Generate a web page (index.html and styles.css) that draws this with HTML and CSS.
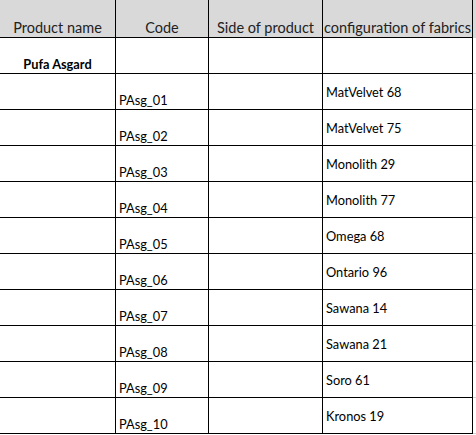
FILE: index.html
```html
<!DOCTYPE html>
<html>
<head>
<meta charset="utf-8">
<link rel="stylesheet" href="styles.css">
</head>
<body>
<table class="sheet">
  <colgroup>
    <col class="c-name"><col class="c-code"><col class="c-side"><col class="c-fab"><col class="c-gut">
  </colgroup>
  <thead>
    <tr class="head">
      <th>Product name</th><th>Code</th><th>Side of product</th><th>configuration of fabrics</th><th class="gut"></th>
    </tr>
  </thead>
  <tbody>
    <tr><td class="title">Pufa Asgard</td><td></td><td></td><td></td><td class="gut"></td></tr>
    <tr><td></td><td class="code">PAsg_01</td><td></td><td class="fab">MatVelvet 68</td><td class="gut"></td></tr>
    <tr><td></td><td class="code">PAsg_02</td><td></td><td class="fab">MatVelvet 75</td><td class="gut"></td></tr>
    <tr><td></td><td class="code">PAsg_03</td><td></td><td class="fab">Monolith 29</td><td class="gut"></td></tr>
    <tr><td></td><td class="code">PAsg_04</td><td></td><td class="fab">Monolith 77</td><td class="gut"></td></tr>
    <tr><td></td><td class="code">PAsg_05</td><td></td><td class="fab">Omega 68</td><td class="gut"></td></tr>
    <tr><td></td><td class="code">PAsg_06</td><td></td><td class="fab">Ontario 96</td><td class="gut"></td></tr>
    <tr><td></td><td class="code">PAsg_07</td><td></td><td class="fab">Sawana 14</td><td class="gut"></td></tr>
    <tr><td></td><td class="code">PAsg_08</td><td></td><td class="fab">Sawana 21</td><td class="gut"></td></tr>
    <tr><td></td><td class="code">PAsg_09</td><td></td><td class="fab">Soro 61</td><td class="gut"></td></tr>
    <tr><td></td><td class="code">PAsg_10</td><td></td><td class="fab">Kronos 19</td><td class="gut"></td></tr>
  </tbody>
</table>
</body>
</html>
```
FILE: styles.css
```css
html, body {
  margin: 0;
  padding: 0;
  background: #ffffff;
  overflow: hidden;
}
.sheet {
  border-collapse: separate;
  border-spacing: 0;
  table-layout: fixed;
  width: 477px;
  font-family: Lato, "Open Sans", sans-serif;
  color: #000;
}
.c-name { width: 116px; }
.c-code { width: 93px; }
.c-side { width: 114px; }
.c-fab { width: 150px; }
.c-gut { width: 4px; }
.sheet th,
.sheet td {
  box-sizing: border-box;
  padding: 0;
  border-right: 1px solid #000;
  border-bottom: 1px solid #000;
  white-space: nowrap;
  overflow: hidden;
}
.head th {
  height: 38px;
  background: #d9d9d9;
  font-weight: normal;
  font-size: 14.5px;
  color: #222;
  text-align: center;
  vertical-align: bottom;
  padding-bottom: 1px;
}
.sheet td {
  height: 36px;
  font-size: 12.8px;
}
.sheet .gut {
  border-right: none;
  border-bottom: 1px solid #d4d4d4;
}
.head .gut {
  background: #d9d9d9;
}
.title {
  font-weight: bold;
  font-size: 12.5px;
  text-align: center;
  vertical-align: bottom;
  padding-bottom: 1px !important;
}
.code {
  vertical-align: bottom;
  padding-left: 3px !important;
  padding-bottom: 1px !important;
}
.fab {
  vertical-align: middle;
  padding-left: 3px !important;
}
```
